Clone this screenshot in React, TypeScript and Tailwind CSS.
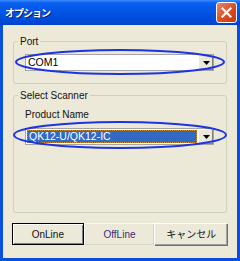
import React from "react";

const font = { fontFamily: '"Liberation Sans", "Noto Sans CJK JP", sans-serif' };

function Arrow() {
  return (
    <svg width="7" height="4" viewBox="0 0 7 4">
      <polygon points="0,0 7,0 3.5,4" fill="#000" />
    </svg>
  );
}

function Combo({ value, selected }: { value: string; selected?: boolean }) {
  return (
    <div className="flex h-[17px] w-[189px] items-stretch border border-[#A5A5A5] bg-white">
      <div className="flex flex-1 items-center px-[1px] py-[1px]">
        {selected ? (
          <div className="flex h-full w-full items-center border border-dotted border-[#C88A2C] bg-[#316AC5] pl-[1px] text-[10.5px] leading-[13px] text-white">
            {value}
          </div>
        ) : (
          <div className="pl-[1px] text-[10.5px] leading-[13px] text-black">{value}</div>
        )}
      </div>
      <div className="flex w-[15px] items-center justify-center border-l border-t border-l-white border-t-white bg-[#ECE9D8] shadow-[inset_-1px_-1px_0_#808080]">
        <Arrow />
      </div>
    </div>
  );
}

export default function App() {
  return (
    <div style={font} className="relative flex h-[261px] w-[240px] flex-col bg-[#0A4EDD]">
      <div className="flex h-[25px] items-center justify-between bg-[linear-gradient(to_bottom,#3A8CFF_0px,#0A5FF0_3px,#0055E5_12px,#0048D8_22px,#0040C8_25px)] pl-[5px] pr-[3px]">
        <span
          style={{ fontFamily: '"Noto Sans CJK JP", sans-serif' }}
          className="text-[10px] font-bold leading-[12px] tracking-[-1px] text-white [text-shadow:1px_1px_0_#0A1E6E]"
        >
          オプション
        </span>
        <div className="flex h-[21px] w-[21px] items-center justify-center rounded-[3px] border border-white bg-[linear-gradient(135deg,#E8876A,#D8491E_60%,#C23A12)]">
          <svg width="11" height="11" viewBox="0 0 11 11">
            <path d="M1.5 1.5 L9.5 9.5 M9.5 1.5 L1.5 9.5" stroke="#fff" strokeWidth="2.2" strokeLinecap="square" />
          </svg>
        </div>
      </div>
      <div className="mx-[3px] mb-[3px] flex flex-1 flex-col bg-[#ECE9D8] px-[10px] pt-[10px] text-[10px] leading-[13px] text-[#111]">
        <fieldset className="h-[49px] rounded-[3px] border border-[#D0D0BF] p-0">
          <legend className="ml-[4px] px-[2px] text-[10px] leading-[13px]">Port</legend>
          <div className="pl-[11px] pt-[6px]">
            <Combo value="COM1" />
          </div>
        </fieldset>
        <fieldset className="mt-[5px] h-[124px] rounded-[3px] border border-[#D0D0BF] p-0">
          <legend className="ml-[4px] px-[2px] text-[10px] leading-[13px]">Select Scanner</legend>
          <div className="pl-[11px]">
            <div className="mt-[6px] h-[14px] leading-[14px]">Product Name</div>
            <div className="mt-[6px]">
              <Combo value="QK12-U/QK12-IC" selected />
            </div>
          </div>
        </fieldset>
        <div className="mt-[10px] flex h-[22px]">
          <div className="-ml-[1px] flex w-[73px] items-center justify-center border border-black bg-[#ECE9D8] shadow-[inset_1px_1px_0_#fff,inset_-1px_-1px_0_#808080]">
            OnLine
          </div>
          <div className="flex w-[72px] items-center justify-center border-l border-t border-l-[#F8F7F0] border-t-[#F8F7F0] bg-[#ECE9D8] text-[#3B2A7A] shadow-[inset_-1px_-1px_0_#D8D5C4]">
            OffLine
          </div>
          <div className="flex w-[74px] items-center justify-center border-l border-t border-l-white border-t-white bg-[#ECE9D8] shadow-[inset_-1px_-1px_0_#A0A0A0,1px_1px_0_#707070]">
            キャンセル
          </div>
        </div>
      </div>
      <svg className="pointer-events-none absolute left-0 top-0" width="240" height="261">
        <ellipse cx="120" cy="62" rx="104" ry="12" fill="none" stroke="#1E34E0" strokeWidth="2" />
        <ellipse cx="120" cy="135" rx="106" ry="13" fill="none" stroke="#1E34E0" strokeWidth="2" />
      </svg>
    </div>
  );
}
